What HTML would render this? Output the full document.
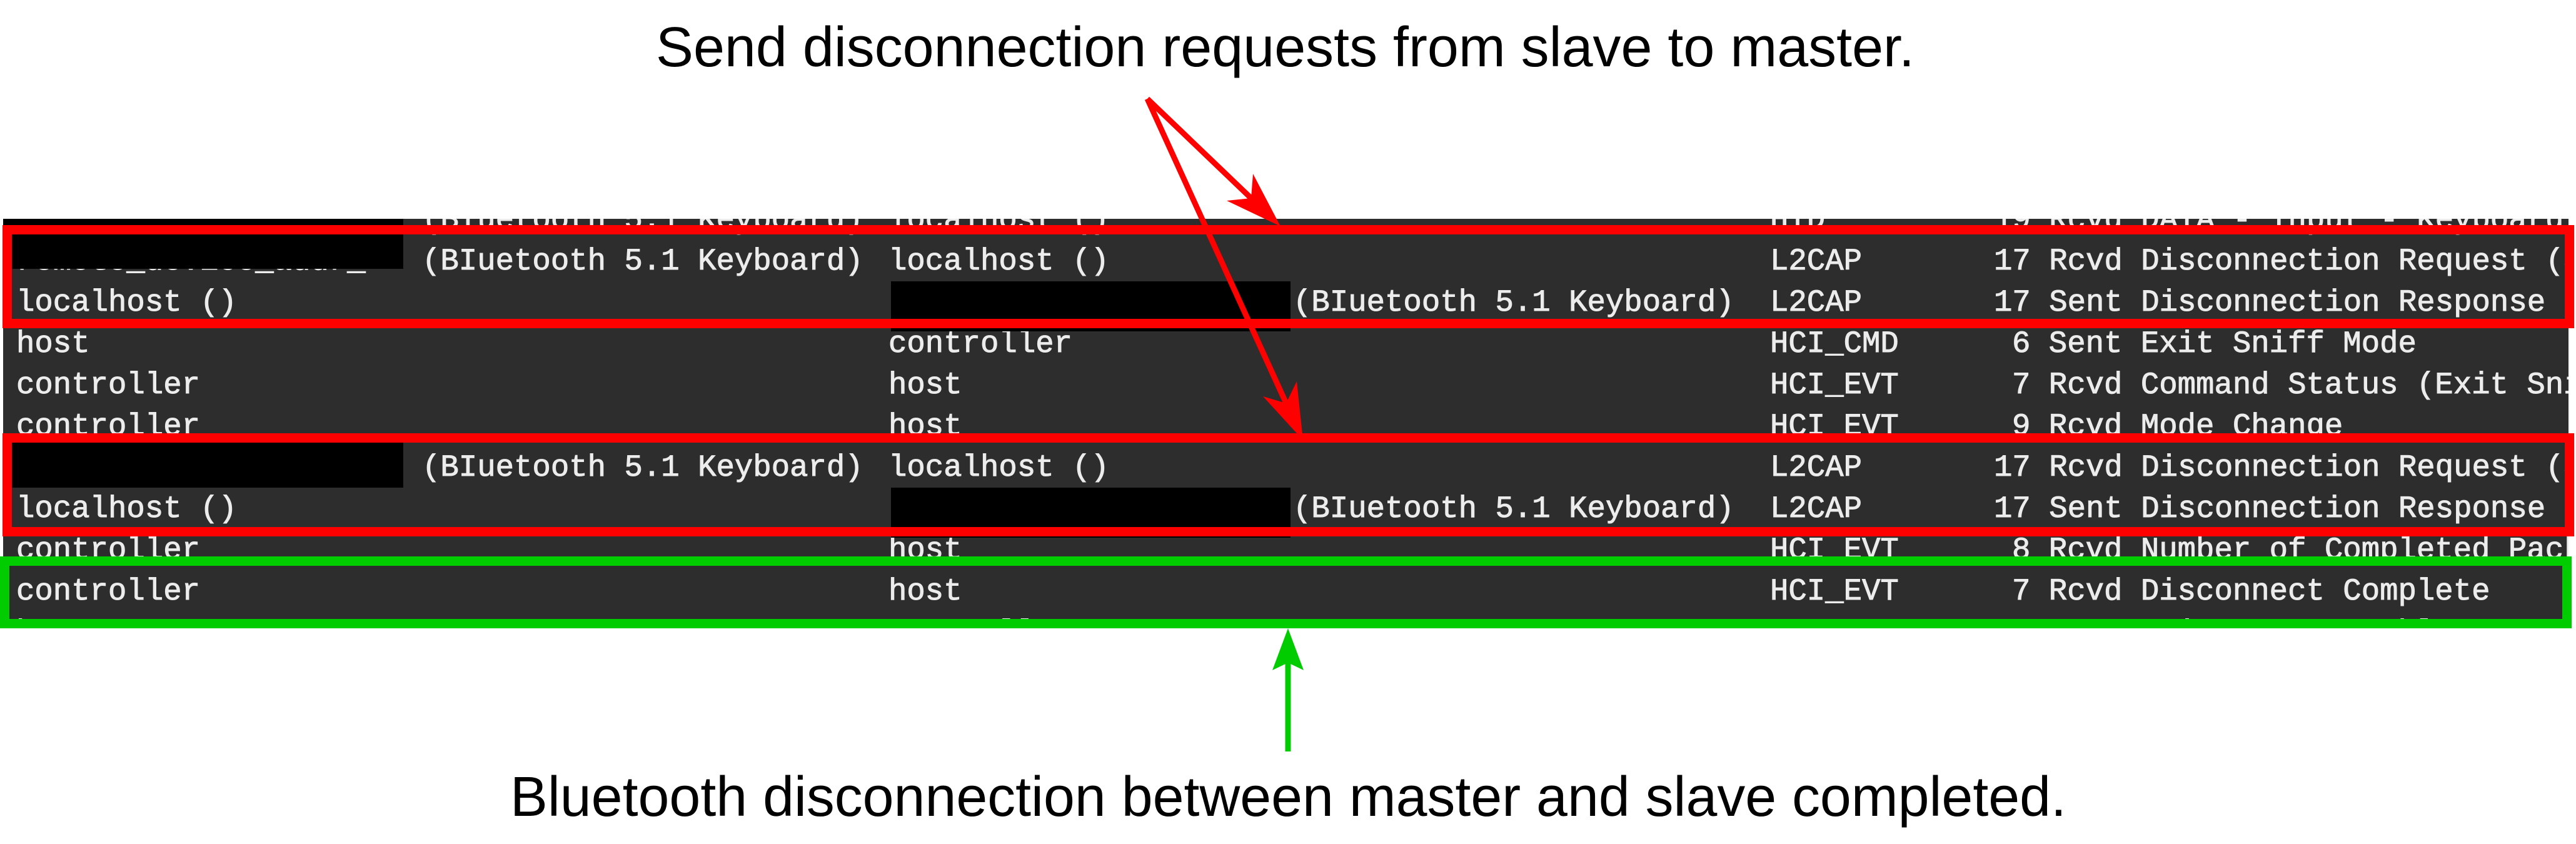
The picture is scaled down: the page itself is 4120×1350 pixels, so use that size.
<!DOCTYPE html>
<html><head><meta charset="utf-8"><style>
html,body{margin:0;padding:0;background:#fff;width:4120px;height:1350px;overflow:hidden}
svg{display:block}
.m{font-family:"Liberation Mono",monospace;font-size:49px;fill:#ececec;stroke:#ececec;stroke-width:1}
.s{font-family:"Liberation Sans",Arial,sans-serif;font-size:90px;fill:#000}
</style></head><body>
<svg width="4120" height="1350" viewBox="0 0 4120 1350" xmlns="http://www.w3.org/2000/svg">
<defs><clipPath id="pc"><rect x="5" y="350" width="4103" height="640"/></clipPath></defs>
<text class="s" x="1049" y="106" textLength="2013" lengthAdjust="spacingAndGlyphs">Send disconnection requests from slave to master.</text>
<rect x="5" y="350" width="4103" height="640" fill="#2d2d2d"/>
<g clip-path="url(#pc)" class="m">
<text x="675" y="365">(BIuetooth 5.1 Keyboard)</text><text x="1421" y="365">localhost ()</text><text x="2831" y="365">HID</text><text x="3189" y="365">19 Rcvd DATA - Input - Keyboard</text>
<text x="26" y="431">remote_device_addr_</text><text x="675" y="431">(BIuetooth 5.1 Keyboard)</text><text x="1421" y="431">localhost ()</text><text x="2831" y="431">L2CAP</text><text x="3189" y="431">17 Rcvd Disconnection Request (SCID</text>
<text x="26" y="497">localhost ()</text><text x="2068" y="497">(BIuetooth 5.1 Keyboard)</text><text x="2831" y="497">L2CAP</text><text x="3189" y="497">17 Sent Disconnection Response (SCID</text>
<text x="26" y="563">host</text><text x="1421" y="563">controller</text><text x="2831" y="563">HCI_CMD</text><text x="3218" y="563">6 Sent Exit Sniff Mode</text>
<text x="26" y="629">controller</text><text x="1421" y="629">host</text><text x="2831" y="629">HCI_EVT</text><text x="3218" y="629">7 Rcvd Command Status (Exit Sniff</text>
<text x="26" y="695">controller</text><text x="1421" y="695">host</text><text x="2831" y="695">HCI_EVT</text><text x="3218" y="695">9 Rcvd Mode Change</text>
<text x="675" y="761">(BIuetooth 5.1 Keyboard)</text><text x="1421" y="761">localhost ()</text><text x="2831" y="761">L2CAP</text><text x="3189" y="761">17 Rcvd Disconnection Request (SCID</text>
<text x="26" y="827">localhost ()</text><text x="2068" y="827">(BIuetooth 5.1 Keyboard)</text><text x="2831" y="827">L2CAP</text><text x="3189" y="827">17 Sent Disconnection Response (SCID</text>
<text x="26" y="893">controller</text><text x="1421" y="893">host</text><text x="2831" y="893">HCI_EVT</text><text x="3218" y="893">8 Rcvd Number of Completed Packets</text>
<text x="26" y="959">controller</text><text x="1421" y="959">host</text><text x="2831" y="959">HCI_EVT</text><text x="3218" y="959">7 Rcvd Disconnect Complete</text>
<text x="26" y="1025">host</text><text x="1421" y="1025">controller</text><text x="2831" y="1025">HCI_CMD</text><text x="3218" y="1025">7 Sent Write Scan Enable</text>
</g>
<rect x="5" y="350" width="640" height="80" fill="#000"/>
<rect x="1425" y="450" width="639" height="80" fill="#000"/>
<rect x="5" y="700" width="640" height="80" fill="#000"/>
<rect x="1425" y="780" width="639" height="80" fill="#000"/>
<rect x="11.5" y="367.5" width="4098" height="150" fill="none" stroke="#ff0000" stroke-width="15"/>
<rect x="11.5" y="700.5" width="4098" height="150" fill="none" stroke="#ff0000" stroke-width="15"/>
<rect x="7.5" y="897.5" width="4098" height="100" fill="none" stroke="#00cc00" stroke-width="15"/>
<line x1="1835" y1="158" x2="2001" y2="317" stroke="#ff0000" stroke-width="9"/>
<polygon points="2048,362 1962,321 2001,317 2004,278" fill="#ff0000"/>
<line x1="1835" y1="158" x2="2057" y2="645" stroke="#ff0000" stroke-width="9"/>
<polygon points="2084,704 2020,634 2057,645 2074,610" fill="#ff0000"/>
<line x1="2060" y1="1202" x2="2060" y2="1060" stroke="#00cc00" stroke-width="9"/>
<polygon points="2060,1005 2035,1072 2060,1060 2085,1072" fill="#00cc00"/>
<text class="s" x="816" y="1305" textLength="2489" lengthAdjust="spacingAndGlyphs">Bluetooth disconnection between master and slave completed.</text>
</svg>
</body></html>
